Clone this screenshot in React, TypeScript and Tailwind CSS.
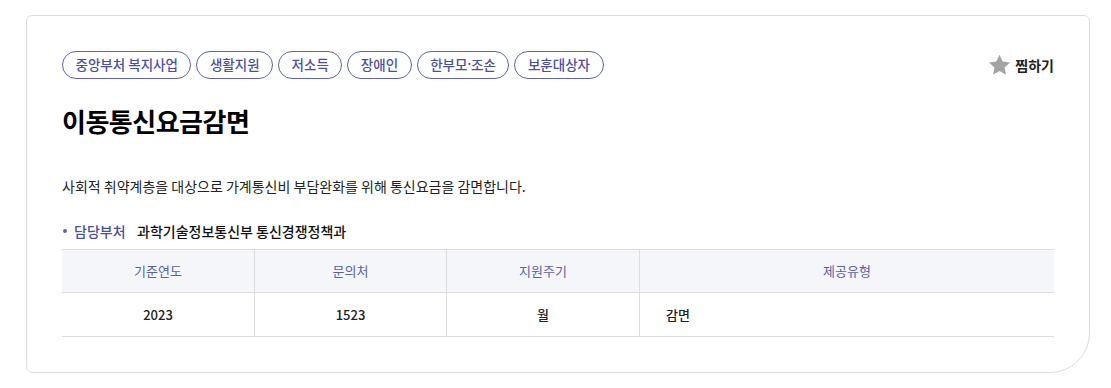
const tags = ["중앙부처 복지사업", "생활지원", "저소득", "장애인", "한부모·조손", "보훈대상자"];

const columns = [
  { label: "기준연도", value: "2023", align: "center" },
  { label: "문의처", value: "1523", align: "center" },
  { label: "지원주기", value: "월", align: "center" },
  { label: "제공유형", value: "감면", align: "left" },
];

function StarIcon() {
  return (
    <svg width="23" height="22" viewBox="0 0 24 23" className="shrink-0">
      <path
        d="M12 0.8l3.3 7.1 7.7 0.9-5.7 5.3 1.5 7.7L12 17.9l-6.8 3.9 1.5-7.7L1 8.8l7.7-0.9z"
        fill="#a3a3a3"
      />
    </svg>
  );
}

// the middle dot is full width in the CJK font, so draw it from Noto Sans
function TagLabel({ text }: { text: string }) {
  const parts = text.split("·");
  if (parts.length === 1) return <>{text}</>;
  return (
    <>
      {parts[0]}
      <span className="font-['Noto_Sans',sans-serif]">·</span>
      {parts[1]}
    </>
  );
}

export default function App() {
  return (
    <div className="w-[1111px] h-[388px] bg-white pt-[15px] pl-[26px] font-['Noto_Sans_CJK_KR','Noto_Sans',sans-serif]">
      <div className="w-[1064px] h-[358px] border border-[#dcdcdc] rounded-[6px] rounded-br-[40px] px-[35px] pt-[35px]">
        <div className="flex items-start justify-between">
          <div className="flex gap-[5px]">
            {tags.map((t) => (
              <span
                key={t}
                className="h-[28px] px-[12.5px] flex items-center rounded-full border border-[#5d62b5] text-[13.5px] font-medium text-[#4a4fa6] leading-none"
              >
                <TagLabel text={t} />
              </span>
            ))}
          </div>
          <button className="flex items-center gap-[4px] mt-[3px] text-[14px] font-bold text-[#222]">
            <StarIcon />
            찜하기
          </button>
        </div>

        <h1 className="mt-[22px] text-[26px] font-bold text-black leading-[40px] tracking-[-0.5px]">
          이동통신요금감면
        </h1>

        <p className="mt-[35px] text-[14px] text-[#222] leading-[20px]">
          사회적 취약계층을 대상으로 가계통신비 부담완화를 위해 통신요금을 감면합니다.
        </p>

        <div className="mt-[25px] flex items-center text-[14px] leading-[20px]">
          <span className="w-[4px] h-[4px] rounded-full bg-[#5d62b5] ml-[1px] mr-[7px]" />
          <span className="text-[#4a4fa6] font-medium w-[63px]">담당부처</span>
          <span className="text-[#111] font-medium">과학기술정보통신부 통신경쟁정책과</span>
        </div>

        <div className="mt-[8px] grid grid-cols-[192px_192px_193px_1fr] border-t border-[#dcdcdc] text-[13px]">
          {columns.map((c, i) => (
            <div
              key={c.label}
              className={`h-[43px] flex items-center justify-center bg-[#f5f6fa] border-b border-[#dcdcdc] text-[#5a5fb0] ${i > 0 ? "border-l" : ""}`}
            >
              {c.label}
            </div>
          ))}
          {columns.map((c, i) => (
            <div
              key={c.value}
              className={`h-[44px] flex items-center border-b border-[#dcdcdc] text-[#222] font-medium ${i > 0 ? "border-l" : ""} ${c.align === "center" ? "justify-center" : "justify-start pl-[26px]"}`}
            >
              {c.value}
            </div>
          ))}
        </div>
      </div>
    </div>
  );
}
